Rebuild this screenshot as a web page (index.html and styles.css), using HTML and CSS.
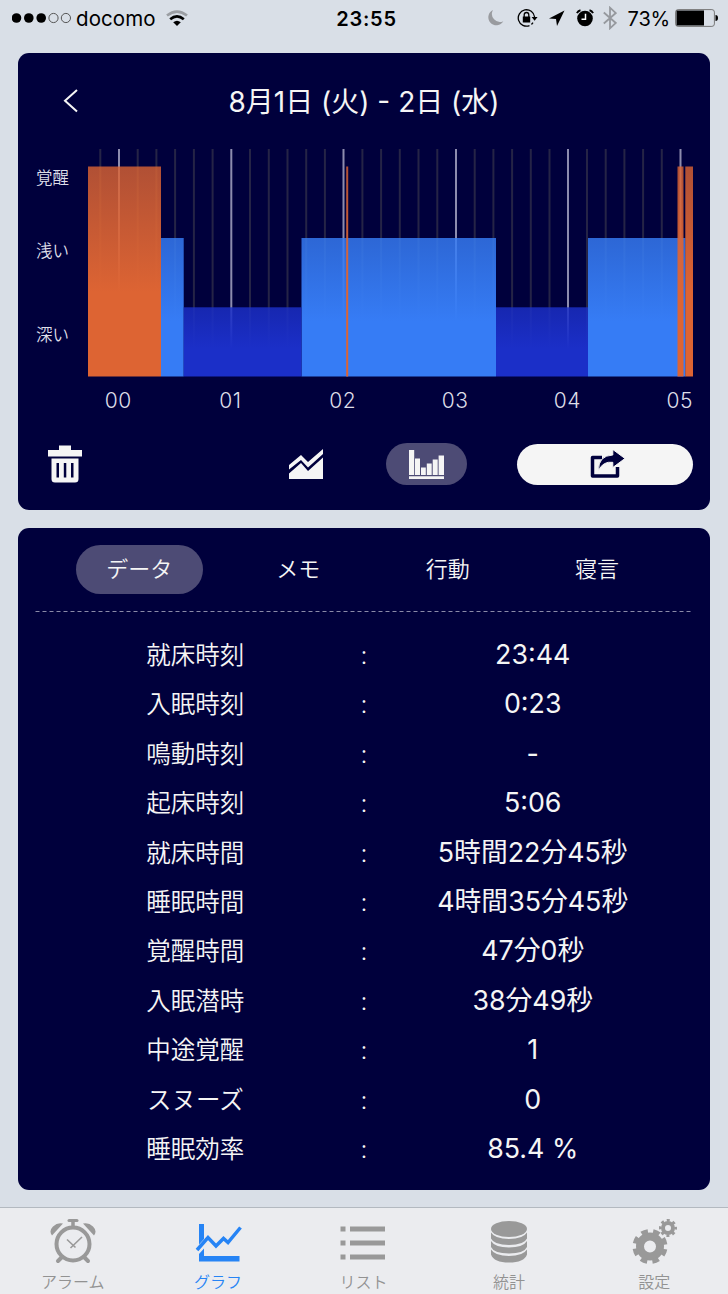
FILE: index.html
```html
<!DOCTYPE html>
<html lang="ja">
	<head>
		<meta charset="utf-8">
		<title>グラフ</title>
		<link rel="stylesheet" href="styles.css">
	</head>
	<body>
		<header class="status">
			<div class="carrier">
				<svg width="60" height="12" viewBox="0 0 60 12">
					<circle cx="4.500" cy="6" r="4.800"/><circle cx="16.800" cy="6" r="4.800"/><circle cx="29.200" cy="6" r="4.800"/>
					<g fill="none" stroke="#555" stroke-width="1"><circle cx="41.500" cy="6" r="4.600"/><circle cx="53.900" cy="6" r="4.600"/></g>
				</svg>
				<span class="docomo">docomo</span>
				<svg class="wifi" width="22" height="17" viewBox="0 0 22 17">
					<g fill="none" stroke-width="2.600">
						<path stroke="#9b9ea3" d="M1 5.600Q11-2.500 21 5.600"/>
						<path stroke="#000" d="M4.200 9.300Q11 3.300 17.800 9.300"/>
					</g>
					<path d="M7.200 12.300Q11 9 14.800 12.300L11 16z"/>
				</svg>
			</div>
			<div class="clock">23:55</div>
			<div class="indicators">
				<svg width="17" height="18" viewBox="0 0 17 18"><path fill="#999b9f" d="M6 1A8 8 0 1 0 16.300 12.200A8 8 0 0 1 6 1z"/></svg>
				<svg class="lock" width="21" height="20" viewBox="0 0 21 20">
					<path fill="none" stroke="#000" stroke-width="1.300" d="M12.500 17.600A8.200 8.200 0 1 1 17.600 9M16 14.600Q15 16 14.400 16.400"/>
					<path d="M14.600 9h6l-3 3.800zM5.800 8.500h7.400v6H5.800z"/>
					<path fill="none" stroke="#000" stroke-width="1.300" d="M7.200 9V6.800a2.300 2.300 0 0 1 4.600 0V9"/>
				</svg>
				<svg class="arrow" width="16" height="16" viewBox="0 0 16 16"><path d="M15.500.5L0 8.500l7 .5 1 7z"/></svg>
				<svg class="alarm" width="18" height="18" viewBox="0 0 18 18">
					<circle cx="9" cy="9.500" r="7.800"/>
					<path fill="none" stroke="#000" stroke-width="2" d="M1 4.200Q2 1.800 4.500 1.200M17 4.200Q16 1.800 13.500 1.200"/>
					<path fill="none" stroke="#fff" stroke-width="1.500" d="M9.500 4.800v5.500H5.500"/>
				</svg>
				<svg class="bt" width="14" height="24" viewBox="0 0 14 24"><path fill="none" stroke="#96999e" stroke-width="1.800" d="M.8 6.500l12 10.500L7 22.300V1.700L12.800 7 .8 17.500"/></svg>
				<span class="percent">73%</span>
				<svg class="battery" width="43" height="18" viewBox="0 0 43 18">
					<rect x=".6" y=".6" width="38.800" height="16.800" rx="2.500" fill="none" stroke="#777"/>
					<path d="M1.500 1.500H29v15H1.500zM40.500 6q2.500 0 2.500 3t-2.500 3z"/>
				</svg>
			</div>
		</header>

		<main>
			<section class="card graph">
				<div class="title">
					<svg class="back" width="16" height="25" viewBox="0 0 16 25"><path fill="none" stroke="#f5f5f5" stroke-width="2" d="M14 2L2 12.800 14 23.600"/></svg>
					<h1>8月1日 (火) - 2日 (水)</h1>
				</div>
				<div class="chart">
					<div class="levels"><span>覚醒</span><span>浅い</span><span>深い</span></div>
					<svg class="plot" width="605" height="228" viewBox="0 0 605 228">
						<defs>
							<linearGradient id="wake" x2="0" y2="1"><stop stop-color="#dd6433" stop-opacity=".8"/><stop offset=".6" stop-color="#dd6433"/></linearGradient>
							<linearGradient id="light" x2="0" y2="1"><stop stop-color="#367cf5" stop-opacity=".83"/><stop offset=".6" stop-color="#367cf5"/></linearGradient>
							<linearGradient id="deep" x2="0" y2="1"><stop stop-color="#1b2fc8" stop-opacity=".83"/><stop offset=".6" stop-color="#1b2fc8"/></linearGradient>
						</defs>
						<!-- 10分ごとの目盛り -->
						<path stroke="#252446" stroke-width="2" d="M12.300 0v227M49.700 0v227M68.400 0v227M87.100 0v227M105.900 0v227M124.600 0v227M162 0v227M180.800 0v227M199.500 0v227M218.200 0v227M236.900 0v227M274.400 0v227M293.100 0v227M311.800 0v227M330.500 0v227M349.300 0v227M386.700 0v227M405.400 0v227M424.100 0v227M442.800 0v227M461.500 0v227M499 0v227M517.700 0v227M536.400 0v227M555.100 0v227M573.800 0v227"/>
						<!-- 1時間ごとの目盛り -->
						<path stroke="#8d8cae" stroke-width="2" d="M31 0v227M143.300 0v227M255.500 0v227M368 0v227M480 0v227M592.500 0v227"/>
						<g fill="url(#wake)">
							<rect x="0" y="17.500" width="73" height="210"/>
						</g>
						<g fill="url(#light)">
							<rect x="73" y="89" width="22.700" height="138.500"/>
							<rect x="213.500" y="89" width="194.500" height="138.500"/>
							<rect x="500" y="89" width="97.500" height="138.500"/>
						</g>
						<g fill="url(#deep)">
							<rect x="95.700" y="158.300" width="117.800" height="69.200"/>
							<rect x="408" y="158.300" width="92" height="69.200"/>
						</g>
						<g fill="url(#wake)">
							<rect x="258.200" y="17.500" width="2" height="210"/>
							<rect x="589.500" y="17.500" width="6" height="210"/>
							<rect x="597.300" y="17.500" width="7.700" height="210"/>
						</g>
					</svg>
					<div class="hours"><span>00</span><span>01</span><span>02</span><span>03</span><span>04</span><span>05</span></div>
				</div>
				<div class="tools">
					<svg class="trash" width="34" height="38" viewBox="0 0 34 38" fill="#f5f5f5">
						<path d="M0 5h11V.5h12V5h11v6.500H0z"/>
						<path fill-rule="evenodd" d="M3.500 13.500h27v20.500q0 3.500-3.500 3.500H7q-3.500 0-3.500-3.500zM8.500 18v14.500h2.500V18zM15.800 18v14.500h2.500V18zM23 18v14.500h2.500V18z"/>
					</svg>
					<svg class="area" width="34" height="30" viewBox="0 0 34 30" fill="#f5f5f5">
						<path d="M0 16L12 6l7 7L34 0v5L19 18.500l-7-7.500L0 20.500z"/>
						<path d="M0 24.500L12 14l7 8L34 8.500V30H0z"/>
					</svg>
					<div class="bars">
						<svg width="35" height="29" viewBox="0 0 35 29" fill="#f5f5f5"><path d="M0 0h5.200v25H0zM6 8.500h5v16.500H6zM12 17.500h4.800V25H12zM17.800 13.500h4.900V25h-4.900zM23.700 9.500h5V25h-5zM29.600 5.500H35V25h-5.400zM0 26.300h35V29H0z"/></svg>
					</div>
					<div class="share">
						<svg width="35" height="29" viewBox="0 0 35 29">
							<path fill="none" stroke="#00003c" stroke-width="3.500" stroke-linejoin="round" d="M12 7.500H2.500v18.500h25V17"/>
							<path fill="#00003c" stroke="#f5f5f5" stroke-width="1" d="M22.800-.5L35 8.500 22.800 17.500V12.300Q13 11 8.500 20.500 8.300 5.500 22.800 5z"/>
						</svg>
					</div>
				</div>
			</section>

			<section class="card detail">
				<nav class="tabs"><span class="active">データ</span><span>メモ</span><span>行動</span><span>寝言</span></nav>
				<svg class="rule" width="658" height="2" viewBox="0 0 658 2"><path stroke="#8a8aa8" stroke-width="1" stroke-dasharray="4 3" d="M.5.500h657"/></svg>
				<dl class="rows">
					<dt>就床時刻</dt><i>:</i><dd>23:44</dd>
					<dt>入眠時刻</dt><i>:</i><dd>0:23</dd>
					<dt>鳴動時刻</dt><i>:</i><dd>-</dd>
					<dt>起床時刻</dt><i>:</i><dd>5:06</dd>
					<dt>就床時間</dt><i>:</i><dd>5時間22分45秒</dd>
					<dt>睡眠時間</dt><i>:</i><dd>4時間35分45秒</dd>
					<dt>覚醒時間</dt><i>:</i><dd>47分0秒</dd>
					<dt>入眠潜時</dt><i>:</i><dd>38分49秒</dd>
					<dt>中途覚醒</dt><i>:</i><dd>1</dd>
					<dt>スヌーズ</dt><i>:</i><dd>0</dd>
					<dt>睡眠効率</dt><i>:</i><dd>85.4 %</dd>
				</dl>
			</section>
		</main>

		<footer class="tabbar">
			<a>
				<svg width="48" height="46" viewBox="0 0 48 46" fill="none" stroke="#999">
					<circle cx="24" cy="26" r="16.500" stroke-width="4"/>
					<path stroke-width="3" stroke-linecap="round" d="M20 2.500h8"/>
					<path stroke-width="3.500" d="M24 2v7"/>
					<path stroke-width="4" stroke-linecap="round" d="M12.500 39.500L9 43M35.500 39.500L39 43"/>
					<path fill="#999" stroke="none" d="M3 17.500Q-.5 13 4 8.500T14 5.500zM45 17.500Q48.500 13 44 8.500T34 5.500z"/>
					<path stroke-width="1.600" d="M18 21.500l8.500 8M33 19L21.500 30"/>
				</svg>
				<span>アラーム</span>
			</a>
			<a class="on">
				<svg width="48" height="46" viewBox="0 0 48 46">
					<path fill="#2684f5" d="M5 6h5v15l-5 5.500zM5 36l5-5.500V38H45.500v5.500H5z"/>
					<path fill="none" stroke="#2684f5" stroke-width="3.500" d="M3 32L14 19.500 22 28l7.500-7.500 4.500 4L46.500 9.500"/>
				</svg>
				<span>グラフ</span>
			</a>
			<a>
				<svg width="48" height="46" viewBox="0 0 48 46" fill="#999"><path d="M1.500 8.500h5v5h-5zM11 8.500h35v5H11zM1.500 22.500h5v5h-5zM11 22.500h35v5H11zM1.500 36.500h5v5h-5zM11 36.500h35v5H11z"/></svg>
				<span>リスト</span>
			</a>
			<a>
				<svg width="48" height="46" viewBox="0 0 48 46" fill="#999">
					<ellipse cx="24" cy="11" rx="18" ry="8"/>
					<path d="M6 14.500q4 6.500 18 6.500t18-6.500v6q-3 6.500-18 6.500t-18-6.500zM6 23q4 6.500 18 6.500t18-6.500v6q-3 6.500-18 6.500t-18-6.500zM6 31.500q4 6.500 18 6.500t18-6.500v5q-3 8-18 8t-18-8z"/>
				</svg>
				<span>統計</span>
			</a>
			<a>
				<svg width="48" height="46" viewBox="0 0 48 46" fill="none" stroke="#999">
					<circle cx="20" cy="28.500" r="10" stroke-width="8"/>
					<circle cx="20" cy="28.500" r="15" stroke-width="5" stroke-dasharray="6.500 5.280" stroke-dashoffset="-2.700"/>
					<circle cx="38" cy="10" r="5" stroke-width="4"/>
					<circle cx="38" cy="10" r="7.700" stroke-width="2.600" stroke-dasharray="3 3.050" stroke-dashoffset="1.500"/>
				</svg>
				<span>設定</span>
			</a>
		</footer>
	</body>
</html>
```

FILE: styles.css
```css
*{
	margin: 0;padding: 0;
	box-sizing: border-box;
}
body{
	width: 728px;
	height: 1294px;
	display: flex;
	flex-direction: column;
	background: #d9dfe7;
	font-family: Inter,"Noto Sans CJK JP",sans-serif;
	overflow: hidden;
}
svg{
	display: block;
	flex: none;
}
.status{
	height: 36px;
	display: grid;
	grid-template-columns: 1fr 100px 1fr;
	align-items: center;
	padding: 0 10px 0 12px;
	color: #000;
	font-size: 20px;
}
.carrier,.indicators{
	display: flex;
	align-items: center;
}
.docomo{
	margin: 1px 10px 0 4px;
	font-size: 20.500px;
	letter-spacing: 0.1px;
}
.clock{
	text-align: center;
	font-weight: 600;
	letter-spacing: 0.8px;
	padding: 1px 0 0 3px;
}
.indicators{
	justify-content: flex-end;
}
.lock{
	margin-left: 13px;
}
.arrow{
	margin-left: 11px;
}
.alarm{
	margin-left: 11px;
}
.bt{
	margin-left: 9px;
}
.percent{
	margin: 1px 5px 0 11px;
	letter-spacing: -0.2px;
}
main{
	display: flex;
	flex-direction: column;
	gap: 18px;
	padding: 17px 18px;
}
.card{
	background: #00003c;
	border-radius: 11px;
	color: #f5f5f5;
	font-weight: 350;
}
.graph{
	height: 457px;
}
.title{
	height: 96px;
	display: grid;
	grid-template-columns: 45px 1fr 45px;
	align-items: center;
}
.back{
	margin: -1px 0 0 45px;
}
h1{
	font-size: 28px;
	font-weight: 390;
	line-height: 40px;
	margin-top: 1px;
	text-align: center;
}
.chart{
	display: grid;
	grid-template-columns: 70px 605px;
	grid-template-rows: 228px 46px;
}
.levels{
	display: flex;
	flex-direction: column;
	align-items: flex-end;
	padding: 17px 19px 0 0;
	font-size: 16.500px;
	line-height: 24px;
	color: #dedee8;
}
.levels span:nth-child(2){
	margin-top: 49px;
}
.levels span:nth-child(3){
	margin-top: 60px;
}
.hours{
	grid-column: 2;
	display: grid;
	grid-template-columns: repeat(6,112.300px);
	margin-left: -26px;
	width: 674px;
	line-height: 48px;
	text-align: center;
	font-size: 21px;
	letter-spacing: 0.5px;
	color: #dedee8;
}
.tools{
	height: 82px;
	display: flex;
	align-items: center;
	padding: 0 17px 0 30px;
}
.area{
	margin-left: 207px;
}
.bars,.share{
	display: flex;
	align-items: center;
	justify-content: center;
	border-radius: 21px;
}
.bars{
	width: 81px;
	height: 42px;
	margin-left: 63px;
	background: #4d4b75;
}
.share{
	width: 176px;
	height: 41px;
	margin-left: auto;
	padding-left: 5px;
	background: #f5f5f5;
}
.detail{
	height: 662px;
}
.tabs{
	height: 83px;
	padding-left: 37px;
	display: grid;
	grid-template-columns: 168.600px repeat(3,149.400px);
	place-items: center;
	font-size: 22px;
	line-height: 49px;
}
.tabs span{
	height: 49px;
}
.tabs .active{
	width: 127px;
	border-radius: 25px;
	background: #4d4b75;
	text-align: center;
}
.rule{
	margin-left: 17px;
}
.rows{
	display: grid;
	grid-template-columns: repeat(3,168.700px);
	grid-auto-rows: 49.400px;
	padding: 18px 93px 0;
	text-align: center;
	line-height: 49px;
	font-size: 24.500px;
}
.rows i{
	font-style: normal;
}
.rows dd{
	font-size: 26.800px;
	font-weight: 390;
	white-space: nowrap;
	margin: -1px -20px 0;
}
.tabbar{
	height: 87px;
	margin-top: auto;
	flex: none;
	display: grid;
	grid-template-columns: repeat(5,1fr);
	background: #ebecef;
	border-top: 1px solid #b3b9c0;
	padding-right: 1px;
	color: #929292;
	font-size: 16px;
	font-weight: 350;
}
.tabbar a{
	display: flex;
	flex-direction: column;
	align-items: center;
	padding-top: 10px;
}
.tabbar span{
	line-height: 24px;
	margin-top: 6px;
}
.tabbar .on{
	color: #2684f5;
}
```
